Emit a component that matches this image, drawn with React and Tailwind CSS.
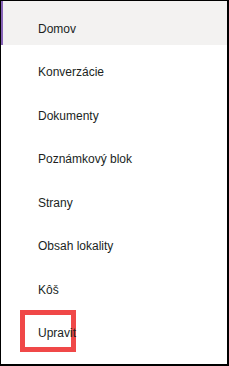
import React from "react";

const items = [
  "Domov",
  "Konverzácie",
  "Dokumenty",
  "Poznámkový blok",
  "Strany",
  "Obsah lokality",
  "Kôš",
  "Upravit",
];

export default function App() {
  return (
    <div
      className="relative w-[229px] h-[366px] bg-white border-black border-t border-l border-r-2 border-b-2 overflow-hidden"
      style={{ fontFamily: '"Liberation Sans", Arial, sans-serif' }}
    >
      <nav className="flex flex-col">
        {items.map((label, i) => (
          <div
            key={label}
            className={
              i === 0
                ? "h-[43.5px] flex items-center pt-[12px] pl-[35px] bg-[#f3f2f1] border-l-2 border-[#8764b8]"
                : "h-[43.5px] flex items-center pt-[12px] pl-[37px]"
            }
          >
            <span className="relative z-10 text-[12px] text-[#201f1e] leading-none">{label}</span>
          </div>
        ))}
      </nav>
      <div className="absolute left-[19px] top-[309px] w-[56px] h-[42px] border-[5px] border-[#f04848]" />
    </div>
  );
}
